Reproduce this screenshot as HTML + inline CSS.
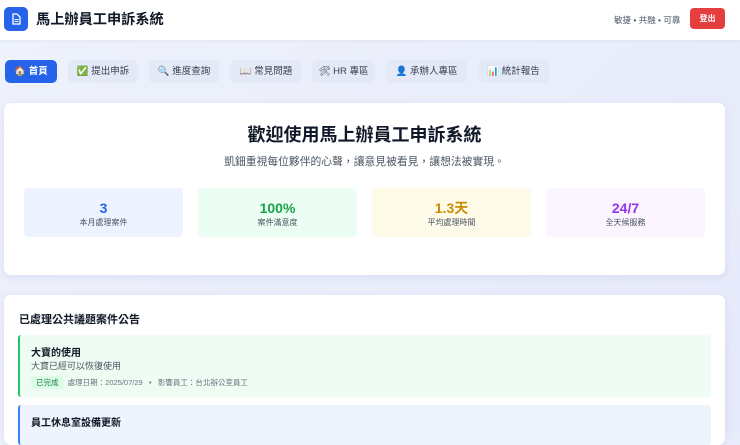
<!DOCTYPE html>
<html><head><meta charset="utf-8"><style>
*{margin:0;padding:0;box-sizing:border-box}
body{width:740px;height:433px;overflow:hidden;background:linear-gradient(135deg,#eef2fb,#e6e9fa);font-family:"Liberation Sans","Noto Sans CJK TC",sans-serif;position:relative;color:#1f2937}
.hdr{position:absolute;left:0;top:0;width:740px;height:40px;background:#fff;box-shadow:0 1px 3px rgba(0,0,0,.05)}
.logo{position:absolute;left:4px;top:7px;width:24px;height:24px;background:#2563eb;border-radius:5px}
.ttl{position:absolute;left:36px;top:10px;font-size:14.2px;font-weight:bold;color:#111827;line-height:20px}
.tag{position:absolute;left:614px;top:14px;font-size:8.5px;color:#4b5563}
.out{position:absolute;left:690px;top:8px;width:35px;height:21px;background:#e53e3e;border-radius:4px;color:#fff;font-size:8px;font-weight:bold;text-align:center;line-height:21px}
.nav{position:absolute;top:60px;height:23px;border-radius:5px;background:#e4e9f8;font-size:9.5px;color:#374151;line-height:23px;text-align:center}
.nav.a{background:#2563eb;color:#fff;font-weight:bold}
.card{position:absolute;left:4px;width:721px;background:#fff;border-radius:7px;box-shadow:0 2px 8px rgba(100,110,180,.12)}
.h1{position:absolute;top:121px;left:4px;width:721px;text-align:center;font-size:18px;font-weight:bold;color:#111827}
.sub{position:absolute;top:153px;left:4px;width:721px;text-align:center;font-size:10.8px;color:#4b5563}
.st{position:absolute;top:188px;width:159px;height:49px;border-radius:4px;text-align:center}
.st b{display:block;margin-top:12px;font-size:14px;line-height:16px}
.st span{display:block;font-size:8px;color:#4b5563;margin-top:1px}
.it{position:absolute;left:18px;width:693px;border-radius:3px}
</style></head><body>
<div class="hdr">
<div class="logo"><svg width="24" height="24" viewBox="0 0 24 24"><path d="M9 7h4l3 3v7H9z" fill="none" stroke="#fff" stroke-width="1.3"/><path d="M10.5 12.5h4M10.5 14.5h4" stroke="#fff" stroke-width="1"/></svg></div>
<div class="ttl">馬上辦員工申訴系統</div>
<div class="tag">敏捷 • 共融 • 可靠</div>
<div class="out">登出</div>
</div>
<div class="nav a" style="left:5px;width:52px">🏠 首頁</div>
<div class="nav" style="left:68px;width:70px">✅ 提出申訴</div>
<div class="nav" style="left:149px;width:70px">🔍 進度查詢</div>
<div class="nav" style="left:230px;width:72px">📖 常見問題</div>
<div class="nav" style="left:312px;width:63px">🛠 HR 專區</div>
<div class="nav" style="left:386px;width:81px">👤 承辦人專區</div>
<div class="nav" style="left:478px;width:71px">📊 統計報告</div>
<div class="card" style="top:103px;height:172px"></div>
<div class="h1">歡迎使用馬上辦員工申訴系統</div>
<div class="sub">凱鈿重視每位夥伴的心聲，讓意見被看見，讓想法被實現。</div>
<div class="st" style="left:24px;background:#eef4ff"><b style="color:#2563eb">3</b><span>本月處理案件</span></div>
<div class="st" style="left:198px;background:#ecfdf3"><b style="color:#16a34a">100%</b><span>案件滿意度</span></div>
<div class="st" style="left:372px;background:#fefbe8"><b style="color:#ca8a04">1.3天</b><span>平均處理時間</span></div>
<div class="st" style="left:546px;background:#faf5ff"><b style="color:#9333ea">24/7</b><span>全天候服務</span></div>
<div class="card" style="top:295px;height:150px"></div>
<div style="position:absolute;left:19px;top:311px;font-size:11px;font-weight:bold;color:#111827">已處理公共議題案件公告</div>
<div class="it" style="top:335px;height:62px;background:#effcf3;border-left:2px solid #22c55e">
<div style="position:absolute;left:11px;top:9px;font-size:10px;font-weight:bold;color:#111827">大寶的使用</div>
<div style="position:absolute;left:11px;top:24px;font-size:9px;color:#4b5563">大寶已經可以恢復使用</div>
<div style="position:absolute;left:11px;top:42px;font-size:7.5px;color:#6b7280;white-space:nowrap"><span style="background:#dcfce7;color:#15803d;padding:2px 5px;border-radius:3px">已完成</span>&nbsp;&nbsp;處理日期：2025/07/29 &nbsp;&nbsp;•&nbsp;&nbsp; 影響員工：台北辦公室員工</div>
</div>
<div class="it" style="top:405px;height:40px;background:#eef4fd;border-left:2px solid #3b82f6">
<div style="position:absolute;left:11px;top:9px;font-size:10px;font-weight:bold;color:#111827">員工休息室設備更新</div>
</div>
</body></html>
